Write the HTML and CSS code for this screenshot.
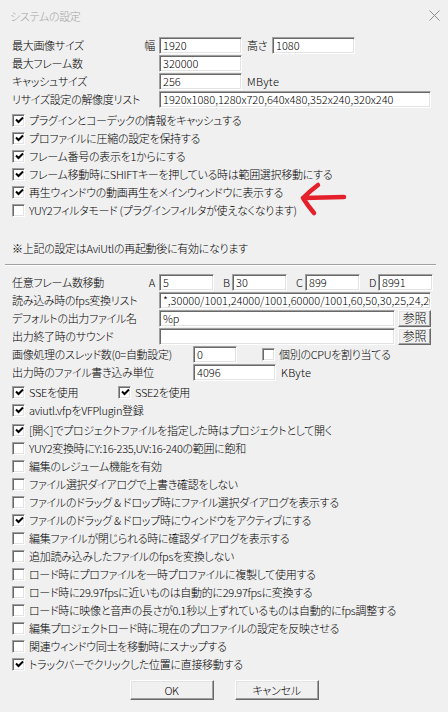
FILE: index.html
```html
<!DOCTYPE html>
<html lang="ja">
<head>
    <meta charset="UTF-8">
    <meta name="viewport" content="width=device-width, initial-scale=1.0">
    <title>システムの設定</title>
    <link rel="stylesheet" href="styles.css">
</head>
<body>

<div class="window">
    <div class="titlebar">
        <span class="title">システムの設定</span>
        <svg class="close" width="11" height="11" viewBox="0 0 11 11">
            <path d="M0.5 0.5 L10.5 10.5 M10.5 0.5 L0.5 10.5" stroke="#8c8c8c" stroke-width="1"/>
        </svg>
    </div>

    <div class="content">
        <div class="row">
            <span class="lead"><span>最大画像サイズ</span><span>幅</span></span>
            <span class="edit size">1920</span>
            <span class="tag">高さ</span>
            <span class="edit size">1080</span>
        </div>
        <div class="row">
            <span class="lead">最大フレーム数</span>
            <span class="edit size">320000</span>
        </div>
        <div class="row">
            <span class="lead">キャッシュサイズ</span>
            <span class="edit size">256</span>
            <span class="unit">MByte</span>
        </div>
        <div class="row">
            <span class="lead">リサイズ設定の解像度リスト</span>
            <span class="edit full">1920x1080,1280x720,640x480,352x240,320x240</span>
        </div>

        <div class="checks top">
            <div class="row check"><span class="cb on"><svg width="9" height="9" viewBox="0 0 9 9"><path d="M1 3.5 L3.5 6 L8 1.5" stroke="#000" stroke-width="2" fill="none"/></svg></span>プラグインとコーデックの情報をキャッシュする</div>
            <div class="row check"><span class="cb on"><svg width="9" height="9" viewBox="0 0 9 9"><path d="M1 3.5 L3.5 6 L8 1.5" stroke="#000" stroke-width="2" fill="none"/></svg></span>プロファイルに圧縮の設定を保持する</div>
            <div class="row check"><span class="cb on"><svg width="9" height="9" viewBox="0 0 9 9"><path d="M1 3.5 L3.5 6 L8 1.5" stroke="#000" stroke-width="2" fill="none"/></svg></span>フレーム番号の表示を1からにする</div>
            <div class="row check"><span class="cb on"><svg width="9" height="9" viewBox="0 0 9 9"><path d="M1 3.5 L3.5 6 L8 1.5" stroke="#000" stroke-width="2" fill="none"/></svg></span>フレーム移動時にSHIFTキーを押している時は範囲選択移動にする</div>
            <div class="row check"><span class="cb on"><svg width="9" height="9" viewBox="0 0 9 9"><path d="M1 3.5 L3.5 6 L8 1.5" stroke="#000" stroke-width="2" fill="none"/></svg></span>再生ウィンドウの動画再生をメインウィンドウに表示する</div>
            <div class="row check"><span class="cb"></span>YUY2フィルタモード (プラグインフィルタが使えなくなります)</div>
        </div>

        <div class="row note">※上記の設定はAviUtlの再起動後に有効になります</div>

        <div class="sep"></div>

        <div class="row">
            <span class="lead"><span>任意フレーム数移動</span><span>A</span></span>
            <span class="edit short">5</span>
            <span class="key">B</span>
            <span class="edit short">30</span>
            <span class="key">C</span>
            <span class="edit short">899</span>
            <span class="key">D</span>
            <span class="edit short">8991</span>
        </div>
        <div class="row">
            <span class="lead">読み込み時のfps変換リスト</span>
            <span class="edit full">*,30000/1001,24000/1001,60000/1001,60,50,30,25,24,20,15,12,10</span>
        </div>
        <div class="row">
            <span class="lead">デフォルトの出力ファイル名</span>
            <span class="edit path">%p</span>
            <span class="btn ref">参照</span>
        </div>
        <div class="row">
            <span class="lead">出力終了時のサウンド</span>
            <span class="edit path"></span>
            <span class="btn ref">参照</span>
        </div>
        <div class="row">
            <span class="lead wide">画像処理のスレッド数(0=自動設定)</span>
            <span class="edit thread">0</span>
            <span class="check inline"><span class="cb"></span>個別のCPUを割り当てる</span>
        </div>
        <div class="row">
            <span class="lead wide">出力時のファイル書き込み単位</span>
            <span class="edit size">4096</span>
            <span class="unit">KByte</span>
        </div>

        <div class="checks bottom">
            <div class="row">
                <span class="check sse"><span class="cb on"><svg width="9" height="9" viewBox="0 0 9 9"><path d="M1 3.5 L3.5 6 L8 1.5" stroke="#000" stroke-width="2" fill="none"/></svg></span>SSEを使用</span>
                <span class="check"><span class="cb on"><svg width="9" height="9" viewBox="0 0 9 9"><path d="M1 3.5 L3.5 6 L8 1.5" stroke="#000" stroke-width="2" fill="none"/></svg></span>SSE2を使用</span>
            </div>
            <div class="row check"><span class="cb on"><svg width="9" height="9" viewBox="0 0 9 9"><path d="M1 3.5 L3.5 6 L8 1.5" stroke="#000" stroke-width="2" fill="none"/></svg></span>aviutl.vfpをVFPlugin登録</div>
            <div class="row check gap"><span class="cb on"><svg width="9" height="9" viewBox="0 0 9 9"><path d="M1 3.5 L3.5 6 L8 1.5" stroke="#000" stroke-width="2" fill="none"/></svg></span>[開く]でプロジェクトファイルを指定した時はプロジェクトとして開く</div>
            <div class="row check"><span class="cb"></span>YUY2変換時にY:16-235,UV:16-240の範囲に飽和</div>
            <div class="row check"><span class="cb"></span>編集のレジューム機能を有効</div>
            <div class="row check"><span class="cb"></span>ファイル選択ダイアログで上書き確認をしない</div>
            <div class="row check"><span class="cb"></span>ファイルのドラッグ &amp; ドロップ時にファイル選択ダイアログを表示する</div>
            <div class="row check"><span class="cb on"><svg width="9" height="9" viewBox="0 0 9 9"><path d="M1 3.5 L3.5 6 L8 1.5" stroke="#000" stroke-width="2" fill="none"/></svg></span>ファイルのドラッグ &amp; ドロップ時にウィンドウをアクティブにする</div>
            <div class="row check"><span class="cb"></span>編集ファイルが閉じられる時に確認ダイアログを表示する</div>
            <div class="row check"><span class="cb"></span>追加読み込みしたファイルのfpsを変換しない</div>
            <div class="row check"><span class="cb"></span>ロード時にプロファイルを一時プロファイルに複製して使用する</div>
            <div class="row check"><span class="cb"></span>ロード時に29.97fpsに近いものは自動的に29.97fpsに変換する</div>
            <div class="row check"><span class="cb"></span>ロード時に映像と音声の長さが0.1秒以上ずれているものは自動的にfps調整する</div>
            <div class="row check"><span class="cb"></span>編集プロジェクトロード時に現在のプロファイルの設定を反映させる</div>
            <div class="row check"><span class="cb"></span>関連ウィンドウ同士を移動時にスナップする</div>
            <div class="row check"><span class="cb on"><svg width="9" height="9" viewBox="0 0 9 9"><path d="M1 3.5 L3.5 6 L8 1.5" stroke="#000" stroke-width="2" fill="none"/></svg></span>トラックバーでクリックした位置に直接移動する</div>
        </div>

        <div class="actions">
            <span class="btn ok">OK</span>
            <span class="btn cancel">キャンセル</span>
        </div>
    </div>

    <!-- hand drawn annotation -->
    <svg class="arrow" width="56" height="40" viewBox="0 0 56 40">
        <path d="M7 20 L48 19 M7 20 Q14 13 22 7 M7 20 Q12 28 18 35" stroke="#e4212a" stroke-width="4.5" stroke-linecap="round" fill="none"/>
    </svg>
</div>

</body>
</html>
```

FILE: styles.css
```css
body { margin: 0; background: #f0f0f0; color: #000; font-family: "Noto Sans CJK JP", "Noto Sans", sans-serif; font-size: 11px; font-weight: 300; letter-spacing: -0.3px; font-feature-settings: "palt"; }
.window { position: relative; width: 448px; height: 712px; overflow: hidden; }

.titlebar { height: 31px; display: flex; align-items: center; justify-content: space-between; padding: 0 8px 0 10px; color: #a3a3a3; }

.content { padding: 5px 0 0 12px; }
.row { display: flex; align-items: center; height: 18px; line-height: 18px; white-space: nowrap; }
.lead { width: 147px; display: flex; justify-content: space-between; padding-right: 4px; box-sizing: border-box; }
.lead.wide { width: 181px; }

.edit {
    height: 17px;
    box-sizing: border-box;
    background: #fff;
    border: 1px solid;
    border-color: #a0a0a0 #fff #fff #a0a0a0;
    box-shadow: inset 1px 1px #696969, inset -1px -1px #e3e3e3;
    padding: 0 3px;
    line-height: 15px;
    letter-spacing: 0;
    overflow: hidden;
    white-space: nowrap;
}
.edit.size { width: 83px; }
.edit.full { width: 272px; }
.edit.short { width: 55px; }
.edit.path { width: 236px; }
.edit.thread { width: 44px; }

.tag { width: 30px; padding-left: 5px; box-sizing: border-box; }
.key { width: 18px; padding-left: 9px; box-sizing: border-box; }
.unit { padding-left: 5px; letter-spacing: 0.3px; }

.btn {
    display: flex;
    align-items: center;
    justify-content: center;
    box-sizing: border-box;
    background: #f0f0f0;
    border: 1px solid;
    border-color: #fff #696969 #696969 #fff;
    box-shadow: inset -1px -1px #a0a0a0, inset 1px 1px #e3e3e3;
}
.btn.ref { width: 33px; height: 17px; margin-left: 3px; font-size: 12px; }

.check { display: flex; align-items: center; gap: 4px; }
.check.inline { margin-left: 25px; }
.check.sse { width: 106px; }
.cb {
    width: 13px;
    height: 13px;
    box-sizing: border-box;
    background: #fff;
    border: 1px solid;
    border-color: #a0a0a0 #fff #fff #a0a0a0;
    box-shadow: inset 1px 1px #696969, inset -1px -1px #e3e3e3;
    display: flex;
    align-items: center;
    justify-content: center;
    flex: none;
}
.cb svg { margin: 1px 0 0 1px; }

.checks.top { margin-top: 3px; }
.note { margin-top: 20px; }
.sep { margin: 7px 0 7px -7px; width: 431px; border-top: 1px solid #a0a0a0; border-bottom: 1px solid #fff; }
.checks.bottom { margin-top: 2px; }
.check.gap { margin-top: 2px; }

.actions { display: flex; justify-content: center; gap: 21px; margin: 7px 0 0 -12px; }
.btn.ok, .btn.cancel { width: 84px; height: 20px; }

.arrow { position: absolute; left: 296px; top: 178px; }
```
